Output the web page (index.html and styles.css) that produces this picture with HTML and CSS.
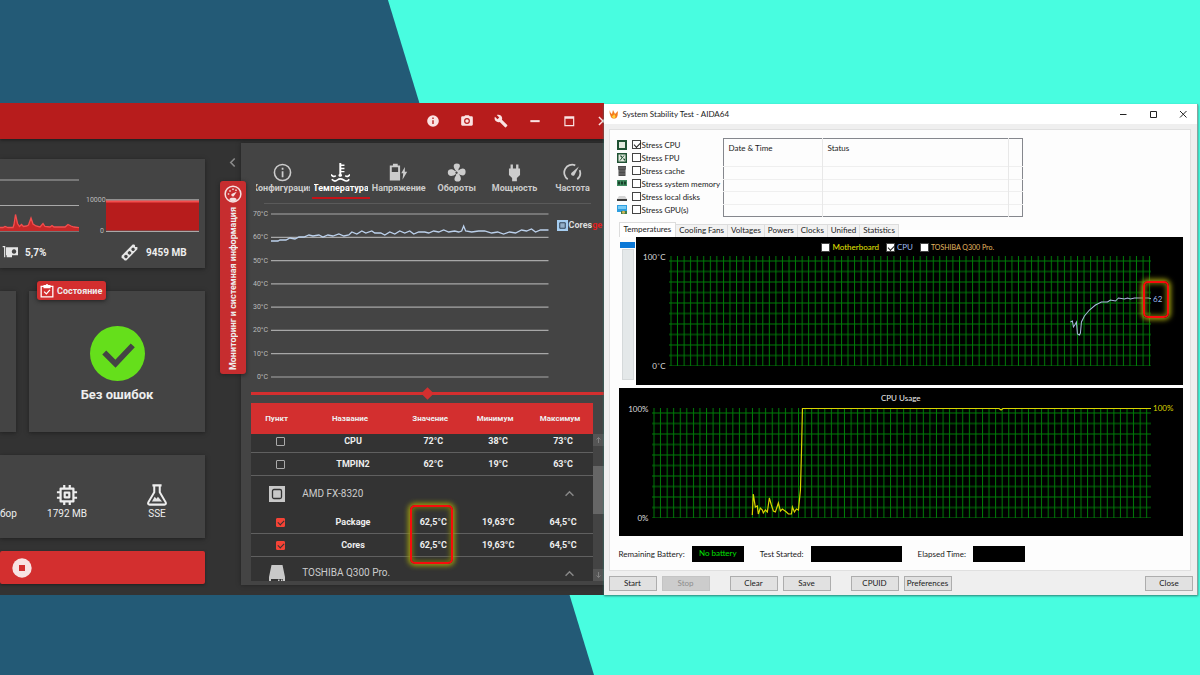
FILE: index.html
```html
<!DOCTYPE html>
<html lang="ru">
<head>
<meta charset="utf-8">
<title>Мониторинг температуры</title>
<link rel="stylesheet" href="styles.css">
</head>
<body>
<main class="desktop">

<section class="occt">
  <header class="occt-bar">
    <button class="bar-btn" aria-label="Информация"><svg viewBox="0 0 24 24"><path fill-rule="evenodd" d="M12 2a10 10 0 1 0 0 20 10 10 0 0 0 0-20zm1.200 15h-2.400v-6.500h2.400zm0-8.500h-2.400V6.200h2.400z"/></svg></button>
    <button class="bar-btn" aria-label="Снимок"><svg viewBox="0 0 24 24"><path fill-rule="evenodd" d="M9 2 7.200 4H4a2 2 0 0 0-2 2v12a2 2 0 0 0 2 2h16a2 2 0 0 0 2-2V6a2 2 0 0 0-2-2h-3.200L15 2zm3 5a5 5 0 1 1 0 10 5 5 0 0 1 0-10z"/><circle cx="12" cy="12" r="3"/></svg></button>
    <button class="bar-btn" aria-label="Настройки"><svg viewBox="0 0 24 24"><path d="m22.700 19-9.100-9.100c.9-2.300.4-5-1.500-6.900-2-2-5-2.400-7.400-1.300L9 6 6 9 1.600 4.700C.4 7.100.9 10.100 2.900 12.100c1.900 1.900 4.600 2.400 6.900 1.500l9.100 9.100c.4.4 1 .4 1.400 0l2.300-2.300c.5-.4.5-1.100.1-1.400z"/></svg></button>
    <button class="bar-btn" aria-label="Свернуть"><svg viewBox="0 0 24 24"><path d="M4 10.500h16v3.500H4z"/></svg></button>
    <button class="bar-btn" aria-label="Развернуть"><svg viewBox="0 0 24 24"><path fill-rule="evenodd" d="M4 4h17v17H4zm2 4v11h13V8z"/></svg></button>
    <button class="bar-btn" aria-label="Закрыть"><svg viewBox="0 0 24 24"><path d="M5 5 19 19M19 5 5 19" stroke="#fbe3e3" stroke-width="2.500"/></svg></button>
  </header>

  <div class="occt-body">
    <div class="side">
      <div class="card load-card">
        <div class="load">
          <svg class="load-chart" viewBox="0 0 79 53" preserveAspectRatio="none">
            <path d="M0 1h79M0 26.500h79M0 52h79" stroke="#a9a9a9" stroke-width="1.200"/>
            <path d="M0 48.500h3l2-1 3 1h5l1-3 1.500-10 2 9 2 3 2-2 2 2 3-.5 2-1 2.500-7 2 6 3 2 4 1 3-3.500 2 3 5 .5 2-1.500 2 1.500h11l3-2.500 3 1.500 3 1 8 1V52H0z" fill="#c62828"/>
            <path d="M0 48.500h3l2-1 3 1h5l1-3 1.500-10 2 9 2 3 2-2 2 2 3-.5 2-1 2.500-7 2 6 3 2 4 1 3-3.500 2 3 5 .5 2-1.500 2 1.500h11l3-2.500 3 1.500 3 1 8 1" fill="none" stroke="#f44d4d" stroke-width="1.300"/>
          </svg>
          <div class="load-value gpu-value"><svg class="ico16" viewBox="0 0 24 24"><path d="M1 4h3v16" fill="none" stroke="#e6e6e6" stroke-width="1.800"/><path fill-rule="evenodd" d="M6 5h18v12h-9v3H7v-3H6zm12 3a3.300 3.300 0 1 0 .1 0z"/></svg>5,7%</div>
        </div>
        <div class="load">
          <div class="ram-chart">
            <div class="ram-scale"><span>10000</span><span>0</span></div>
            <svg class="ram-plot" viewBox="0 0 93 33" preserveAspectRatio="none">
              <path d="M0 1h93M0 32.500h93" stroke="#a9a9a9" stroke-width="1.300"/>
              <path d="M0 2.500h93V31.500H0z" fill="#b71c1c"/>
              <path d="M0 2.500h93" stroke="#f44d4d" stroke-width="1.800"/>
            </svg>
          </div>
          <div class="load-value ram-value"><svg class="ico19" viewBox="0 0 24 24"><path fill-rule="evenodd" d="M2 16 16 2l2 0 1 1 0 2 3 0 0 3-14 14-2 0-1-1-1-1-2-1zM6 15.500a2 2 0 1 0 3 3 2 2 0 0 0-3-3zM10.500 11a2 2 0 1 0 3 3 2 2 0 0 0-3-3zM15 6.500a2 2 0 1 0 3 3 2 2 0 0 0-3-3z"/></svg>9459 MB</div>
        </div>
      </div>

      <div class="status-row">
        <div class="card"></div>
        <div class="card status-card">
          <div class="badge"><svg class="ico14" viewBox="0 0 24 24"><path d="M2 4h20v18H2zM7 6V3h3l2-2 2 2h3v3zM7 13l4 4 6-7" fill="none" stroke="#fff" stroke-width="2.200"/></svg>Состояние</div>
          <svg class="check" viewBox="0 0 54 54"><circle cx="27" cy="27" r="27" fill="#65df1b"/><path d="m14 26 11 11 17-18" fill="none" stroke="#444" stroke-width="5.500"/></svg>
          <p class="verdict">Без ошибок</p>
        </div>
      </div>

      <div class="card options">
        <div class="option cut">бор</div>
        <div class="option"><svg class="ico22" viewBox="0 0 24 24"><path d="M5 5h14v14H5zM9.500 9.500h5v5h-5zM9 1v4M15 1v4M9 19v4M15 19v4M1 9h4M1 15h4M19 9h4M19 15h4" fill="none" stroke="#eee" stroke-width="2.400" stroke-linejoin="round"/></svg>1792 MB</div>
        <div class="option"><svg class="ico22" viewBox="0 0 24 24"><path d="M7 1.500h10M9 2v7L2.500 20c-.6 1.500 0 2.500 1.500 2.500h16c1.500 0 2.100-1 1.500-2.500L15 9V2" fill="none" stroke="#eee" stroke-width="2.200"/><path d="m6.500 19 3-5 2 2 1.500-2 4.500 5z"/></svg>SSE</div>
      </div>

      <button class="stop-test" aria-label="Остановить тест"><svg class="ico20" viewBox="0 0 20 20"><circle cx="10" cy="10" r="9.700" fill="#f7e3e3"/><path d="M7 7h6v6H7z" fill="#d32f2f"/></svg></button>
    </div>

    <div class="gutter">
      <button class="collapse" aria-label="Свернуть панель"><svg viewBox="0 0 8 12"><path d="M6.500 1.500 2 6l4.500 4.500" fill="none" stroke="#8c8c8c" stroke-width="1.800"/></svg></button>
      <div class="vtab">
        <svg class="ico18" viewBox="0 0 24 24"><circle cx="12" cy="12" r="10.500" fill="none" stroke="#f5e0e0" stroke-width="2"/><path d="M7 19c2-2.500 8-2.500 10 0l-2 2.500H9zM10 12l7-3-4 6c-2 1-4-1-3-3zM5 11h2v2H5zM7 7h2v2H7zM11 4.500h2v2h-2zM15 6h2v2h-2z" fill="#f5e0e0"/></svg>
        <span>Мониторинг и системная информация</span>
      </div>
    </div>

    <div class="panel">
      <nav class="tabs">
        <button class="tab"><svg viewBox="0 0 24 24"><circle cx="12" cy="12" r="10.200" fill="none" stroke="#ccc" stroke-width="2"/><path d="M11 10.500h2.200V18H11zM11 6h2.200v2.400H11z"/></svg><span>Конфигурация</span></button>
        <button class="tab active"><svg viewBox="0 0 24 24"><path d="M10.500 0h2.500v2h4v1.800h-4V6h4v1.800h-4V10h4v1.800h-4V14c1.500.6 1.500 3.500-1.300 3.500S9 14.600 10.500 14z"/><path d="M0 14.500q3 4 6 1.500M18 16q3 2.500 6-1.500M1 20.500q3.500 4 7 1t8 0 7-1" fill="none" stroke="#fff" stroke-width="2"/></svg><span>Температура</span></button>
        <button class="tab"><svg viewBox="0 0 24 24"><path fill-rule="evenodd" d="M5 1h6v2h3v19H1V3h4zM3.500 5.500v6h8v-6z"/><path d="m20 5-4.500 8H18l-1 8 6-10h-3z"/></svg><span>Напряжение</span></button>
        <button class="tab"><svg viewBox="0 0 24 24"><path fill-rule="evenodd" d="M12 10.500c-4-4-5.500-10 .5-10 5 0 4.500 4 2 7l0 2c4-4 9-3.500 9 1.500 0 6-5 5.500-9 2.500 4 4 4.500 10-1 10-5 0-5-4-2-8l0-2c-4 4-10.500 4-10.500-1.500 0-5 6-5 9-2zM12 10.800a1.500 1.500 0 1 0 .1 0z"/></svg><span>Обороты</span></button>
        <button class="tab"><svg viewBox="0 0 24 24"><path d="M7 2h3v5h4V2h3v5h2v8l-4 4v4H9v-4l-4-4V7h2z"/></svg><span>Мощность</span></button>
        <button class="tab"><svg viewBox="0 0 24 24"><path d="M6 20.500A10 10 0 0 1 15.500 3M21 9a10 10 0 0 1-3 11.500" fill="none" stroke="#ccc" stroke-width="2.200"/><path d="M20 4.500 14.500 15c-1.500 2.500-5.500 0-4-2.500z"/></svg><span>Частота</span></button>
      </nav>
      <hr class="rule">

      <div class="temp-chart">
        <div class="scale"><span>70°C</span><span>60°C</span><span>50°C</span><span>40°C</span><span>30°C</span><span>20°C</span><span>10°C</span><span>0°C</span></div>
        <svg class="temp-plot" viewBox="0 0 278 165" preserveAspectRatio="none">
          <path d="M0 1h278M0 24.300h278M0 47.600h278M0 70.900h278M0 94.100h278M0 117.400h278M0 140.700h278M0 164h278" stroke="#a7a7a7" stroke-width="1.200"/>
          <path d="M0 28 7 28 9 27 15 27 19 25 24 26 28 24 33 24 38 22 42 23 48 22 52 24 57 22 62 23 68 21 73 23 78 22 81 19 86 21 91 18 95 20 101 18 104 20 110 20 114 22 119 19 124 21 129 18 134 20 139 18 143 21 148 19 154 19 158 20 163 18 168 19 173 17 178 19 184 18 188 19 191 18 193 13 195 18 201 19 208 18 214 18 221 20 227 19 233 21 239 19 245 20 251 17 256 18 261 16 265 19 270 17 278 17" fill="none" stroke="#bcd1ec" stroke-width="1.300"/>
        </svg>
        <div class="legend"><svg class="ico11" viewBox="0 0 12 12"><path d="M0 0h12v12H0z" fill="#a5cdf0"/><path d="M3 3h6v6H3z" fill="#93afc8" stroke="#26384a"/></svg><b>Cores<span class="pkg">ge</span></b></div>
      </div>

      <div class="splitter"><i></i></div>

      <div class="sensors">
        <table>
          <colgroup><col class="c1"><col class="c2"><col class="c3"><col class="c4"><col class="c5"></colgroup>
          <thead><tr><th>Пункт</th><th>Название</th><th>Значение</th><th>Минимум</th><th>Максимум</th></tr></thead>
          <tbody>
            <tr class="first"><td><input type="checkbox" aria-label="CPU"></td><td>CPU</td><td>72°C</td><td>38°C</td><td>73°C</td></tr>
            <tr><td><input type="checkbox" aria-label="TMPIN2"></td><td>TMPIN2</td><td>62°C</td><td>19°C</td><td>63°C</td></tr>
            <tr class="group"><td><svg class="ico16" viewBox="0 0 16 16"><path d="M0 0h16v16H0z" fill="#c8c8c8"/><rect x="3.500" y="3.500" width="9" height="9" rx="1.500" fill="#c8c8c8" stroke="#333" stroke-width="1.300"/></svg></td><td colspan="3">AMD FX-8320</td><td><svg class="up" viewBox="0 0 8 6"><path d="m.5 5 3.500-3.500L7.500 5" fill="none" stroke="#888" stroke-width="1.300"/></svg></td></tr>
            <tr><td><input type="checkbox" checked aria-label="Package"></td><td>Package</td><td>62,5°C</td><td>19,63°C</td><td>64,5°C</td></tr>
            <tr><td><input type="checkbox" checked aria-label="Cores"></td><td>Cores</td><td>62,5°C</td><td>19,63°C</td><td>64,5°C</td></tr>
            <tr class="group last"><td><svg class="ico16" viewBox="0 0 16 16"><path d="M2.500 0h11L16 12v4h-2v-2H2v2H0v-4z" fill="#c8c8c8"/><path d="M9 14.500h1.500V16H9zM12 14.500h1.500V16H12z" fill="#c8c8c8"/></svg></td><td colspan="3">TOSHIBA Q300 Pro.</td><td><svg class="up" viewBox="0 0 8 6"><path d="m.5 5 3.500-3.500L7.500 5" fill="none" stroke="#888" stroke-width="1.300"/></svg></td></tr>
          </tbody>
        </table>
        <div class="scroll"><svg viewBox="0 0 11 12"><path d="M5.500 9V3.500M3.500 5.500l2-2 2 2" fill="none" stroke="#808080"/></svg><i></i><svg viewBox="0 0 11 12"><path d="M5.500 3v5.500M3.500 6.500l2 2 2-2" fill="none" stroke="#808080"/></svg></div>
        <div class="mark mark-sensors"></div>
      </div>
    </div>
  </div>
</section>

<section class="aida" lang="en">
  <header class="aida-bar">
    <svg class="ico10" viewBox="0 0 10 10"><path d="M1 1c0 3 1 3 2 4l1-4 2 4 3-3c-.5 3 0 4-1 6-1 2-5 2-6 0C1 6 0 3 1 1z" fill="#f47b1c"/><path d="M3 8c0-2 2-1 2-3 2 2 2 4 0 4.500z" fill="#ffd23c"/></svg>
    <h1>System Stability Test - AIDA64</h1>
    <div class="win-btns">
      <button aria-label="Minimize"><svg viewBox="0 0 10 10"><path d="M2 5.500h6.500" stroke="#222"/></svg></button>
      <button aria-label="Maximize"><svg viewBox="0 0 10 10"><path d="M2.500 2.500h6v6h-6z" fill="none" stroke="#222"/></svg></button>
      <button aria-label="Close window"><svg viewBox="0 0 10 10"><path d="m2 2 6.500 6.500M8.500 2 2 8.500" stroke="#222"/></svg></button>
    </div>
  </header>

  <div class="sheet">
    <div class="top">
      <div class="stress">
        <label><svg class="ico10" viewBox="0 0 10 10"><path d="M0 0h10v10H0z" fill="#1f5233"/><path d="M2 2h6v6H2z" fill="#e3eadf"/></svg><input type="checkbox" checked>Stress CPU</label>
        <label><svg class="ico10" viewBox="0 0 10 10"><path d="M0 0h10v10H0z" fill="#1f5233"/><path d="M1.500 1.500h7v7h-7z" fill="#e3eadf"/><path d="m3 7.500 4-5M3 3h1.500v1.500M6 6h1.500v1.500" stroke="#1f5233" fill="none"/></svg><input type="checkbox">Stress FPU</label>
        <label><svg class="ico10" viewBox="0 0 10 10"><path d="M1 0h8v3L8.500 4v6h-7V4L1 3z" fill="#4d4d4d"/><path d="M1 2h8M2 5h6M2 8h6" stroke="#8a8a8a" stroke-width=".6"/></svg><input type="checkbox">Stress cache</label>
        <label><svg class="ico10" viewBox="0 0 10 10"><path d="M0 1h10v6H0z" fill="#3f8a5f"/><path d="M1 2.500h2v3H1zM4 2.500h2v3H4zM7 2.500h2v3H7z" fill="#174029"/></svg><input type="checkbox">Stress system memory</label>
        <label><svg class="ico10" viewBox="0 0 10 10"><path d="m2 4 6 0 2 3H0z" fill="#d4d4d4"/><path d="M0 7h10v2H0z" fill="#3c3c3c"/></svg><input type="checkbox">Stress local disks</label>
        <label><svg class="ico10" viewBox="0 0 10 10"><path d="M0 0h10v7H0z" fill="#2f9fe0"/><path d="M1 1h8v3H1z" fill="#7accf5"/><path d="M4 6h6v3H4z" fill="#3f7d4a"/><circle cx="6.500" cy="7.300" r="1.500" fill="#d5b85a"/></svg><input type="checkbox">Stress GPU(s)</label>
      </div>
      <table class="log">
        <colgroup><col class="l1"><col class="l2"><col class="l3"></colgroup>
        <thead><tr><th>Date &amp; Time</th><th>Status</th><th></th></tr></thead>
        <tbody><tr><td></td><td></td><td></td></tr><tr><td></td><td></td><td></td></tr><tr><td></td><td></td><td></td></tr><tr><td></td><td></td><td></td></tr></tbody>
      </table>
    </div>

    <nav class="pages">
      <button class="on">Temperatures</button><button>Cooling Fans</button><button>Voltages</button><button>Powers</button><button>Clocks</button><button>Unified</button><button>Statistics</button>
    </nav>

    <div class="temp-row">
      <div class="strip"><i></i><b></b></div>
      <div class="graph">
        <div class="g-head">
          <label class="yel"><input type="checkbox">Motherboard</label>
          <label class="blu"><input type="checkbox" checked>CPU</label>
          <label class="org"><input type="checkbox">TOSHIBA Q300 Pro.</label>
        </div>
        <div class="g-body">
          <div class="g-scale gs-temp"><span>100˚C</span><span>0˚C</span></div>
          <svg viewBox="0 0 482 110" preserveAspectRatio="none">
            <defs><pattern id="grid" width="13.100" height="21" patternUnits="userSpaceOnUse" x="1.500" y="4.500"><path d="M.5 0v21M7 0v21M0 .5h13.100M0 11h13.100" stroke="#007c08" stroke-width="1"/></pattern></defs>
            <path d="M0 0h482v110H0z" fill="url(#grid)"/>
            <path d="M401 66 403 65 404 71 406 68 407 66 408 78 410 79 411 77 412 66 415 60 420 54 426 49 432 46 438 46 441 44 446 45 449 42 455 43 458 42 461 43 465 42 470 42 479 42 482 43" fill="none" stroke="#a9bde0"/>
          </svg>
          <span class="g-end c62">62</span>
        </div>
        <div class="mark mark-62"></div>
      </div>
    </div>

    <div class="graph usage">
      <div class="g-title">CPU Usage</div>
      <div class="g-body">
        <div class="g-scale gs-cpu"><span>100%</span><span>0%</span></div>
        <svg viewBox="0 0 498 110" preserveAspectRatio="none">
          <path d="M0 0h498v110H0z" fill="url(#grid)"/>
          <path d="M100 107 101 86 103 99 105 98 106 106 108 100 110 102 111 105 113 102 115 104 117 90 119 97 121 103 123 104 126 95 128 103 130 101 134 104 136 106 139 106 140 99 142 104 144 101 146 102 147 92 148 82 149 45 150 .5 346 .5 348 2 350 .5 498 .5" fill="none" stroke="#d9d400" stroke-width="1.200"/>
        </svg>
        <span class="g-end c100">100%</span>
      </div>
    </div>

    <div class="info">
      <span>Remaining Battery:</span><output class="o1">No battery</output>
      <span>Test Started:</span><output class="o2"></output>
      <span>Elapsed Time:</span><output class="o1"></output>
    </div>
  </div>

  <footer class="cmds">
    <button>Start</button><button disabled>Stop</button>
    <button class="sp">Clear</button><button>Save</button>
    <button class="sp">CPUID</button><button>Preferences</button>
    <button class="end">Close</button>
  </footer>
</section>

</main>
</body>
</html>
```
FILE: styles.css
```css
* { box-sizing: border-box; }
body { margin: 0; font-family: Roboto, "Noto Sans", sans-serif; color: #eee; }
button { margin: 0; padding: 0; border: 0; background: none; font: inherit; color: inherit; }
p, h1 { margin: 0; }
svg { display: block; fill: #e6e6e6; flex: none; }

.desktop {
  min-height: 100vh;
  display: flex;
  align-items: flex-start;
  padding: 103px 2px 80px 0;
  position: relative;
  background: #48fde0;
  overflow: hidden;
}
.desktop::before {
  content: "";
  position: absolute;
  inset: 0;
  background: #235a76;
  clip-path: polygon(0 0, 32.330% 0, 49.500% 100%, 0 100%);
}

.ico10 { width: 10px; height: 10px; }
.ico11 { width: 11px; height: 11px; }
.ico14 { width: 14px; height: 14px; }
.ico16 { width: 16px; height: 16px; }
.ico18 { width: 18px; height: 18px; }
.ico19 { width: 19px; height: 19px; }
.ico20 { width: 20px; height: 20px; }
.ico22 { width: 22px; height: 22px; }

/* OCCT window */
.occt { flex: 604 1 0; min-width: 0; position: relative; overflow: hidden; background: #333; }
.occt-bar {
  height: 36px;
  display: flex;
  justify-content: flex-end;
  align-items: center;
  gap: 20px;
  margin-right: -6px;
  background: #b71c1c;
  box-shadow: 0 1px 3px #1c1c1c;
}
.bar-btn svg { width: 14px; height: 14px; fill: #fbe3e3; }
.occt-body { display: grid; grid-template-columns: 205px 36px 1fr; padding-bottom: 10px; }
.side { padding-top: 20px; }
.card { background: #444; box-shadow: 0 1px 4px #202020; }

.load-card { height: 109px; display: grid; grid-template-columns: 79px 1fr; column-gap: 7px; padding: 20px 6px 0 0; }
.load { display: flex; flex-direction: column; }
.load-chart { width: 100%; height: 53px; }
.load-value { display: flex; align-items: center; gap: 7px; height: 22px; margin-top: auto; margin-bottom: 5px; font-size: 10px; font-weight: 700; }
.gpu-value { padding-left: 2px; }
.ram-value { padding-left: 34px; }
.ram-chart { display: flex; gap: 2px; padding-top: 20px; }
.ram-scale { width: 18px; display: flex; flex-direction: column; justify-content: space-between; text-align: right; font-size: 7px; line-height: 8px; color: #bbb; margin: -3px 0; }
.ram-plot { flex: 1; height: 33px; min-width: 0; }

.status-row { display: grid; grid-template-columns: 16px 1fr; gap: 13px; margin-top: 23px; }
.status-card { height: 141px; position: relative; display: flex; flex-direction: column; align-items: center; padding-top: 35px; }
.badge {
  position: absolute; left: 8px; top: -10px; height: 19px;
  display: flex; align-items: center; gap: 3px; padding: 0 4px 0 3px;
  background: #d32f2f; border-radius: 3px; font-size: 9px; font-weight: 700; box-shadow: 0 1px 4px #202020;
}
.check { width: 55px; height: 55px; }
.verdict { margin-top: 5px; font-size: 13px; line-height: 18px; font-weight: 700; }

.options { height: 83px; margin-top: 23px; display: grid; grid-template-columns: 22px 90px 90px; padding-top: 29px; font-size: 10px; line-height: 12px; }
.option { display: flex; flex-direction: column; align-items: center; gap: 2px; }
.option.cut { align-items: flex-start; justify-content: flex-end; padding-bottom: 18px; }
.stop-test { display: flex; align-items: center; width: 100%; height: 33px; margin-top: 13px; padding-left: 12px; background: #d32f2f; border-radius: 2px; box-shadow: 0 1px 3px #202020; }

.gutter { position: relative; z-index: 1; }
.collapse { display: block; margin: 18px 0 0 24px; }
.collapse svg { width: 7px; height: 11px; }
.vtab {
  position: absolute; left: 15px; top: 42px; width: 26px; height: 193px;
  display: flex; flex-direction: column; align-items: center; justify-content: space-between; padding: 4px 0;
  background: #c62d2f; border-radius: 3px; box-shadow: 0 1px 4px #222;
  font-size: 9px; line-height: 12px; font-weight: 700;
}
.vtab span { writing-mode: vertical-rl; transform: rotate(180deg); white-space: nowrap; }

.panel { min-width: 0; margin-top: 4px; background: #444; box-shadow: 0 0 4px #222; padding-bottom: 4px; }
.tabs { display: grid; grid-template-columns: repeat(6, 1fr); padding: 0 2px 0 13px; height: 60px; }
.tab { display: flex; flex-direction: column; align-items: center; justify-content: flex-start; padding-top: 20px; height: 56px; min-width: 0; color: #ccc; }
.tab svg { width: 19px; height: 19px; fill: #ccc; }
.tab span { display: flex; justify-content: center; width: 54px; overflow: hidden; white-space: nowrap; font-size: 9px; line-height: 12px; font-weight: 700; }
.tab.active { color: #fff; border-bottom: 2px solid #c51218; }
.tab.active svg { fill: #fff; }
.rule { height: 1px; margin: 0 13px 0 23px; border: 0; background: #5a5a5a; }

.temp-chart { display: flex; gap: 3px; margin-left: 11px; padding-top: 9px; height: 183px; }
.scale { width: 16px; height: 171px; margin-top: -3px; display: flex; flex-direction: column; justify-content: space-between; text-align: right; font-size: 7px; line-height: 8px; color: #bbb; }
.temp-plot { flex: 1; min-width: 0; height: 165px; }
.legend { display: flex; align-items: center; align-self: flex-start; gap: 1px; width: 47px; margin: 6px 0 0 5px; font-size: 9px; line-height: 12px; color: #ddd; }
.legend .pkg { color: #e02020; }

.splitter { height: 3px; margin: 5px 0 8px 10px; background: #d32f2f; display: flex; justify-content: center; align-items: center; }
.splitter i { width: 9px; height: 9px; background: #d32f2f; transform: rotate(45deg); }

.sensors { position: relative; display: flex; margin-left: 10px; background: #333; }
.sensors table { flex: 1; min-width: 0; table-layout: fixed; border-collapse: separate; border-spacing: 0; font-size: 9px; line-height: 12px; font-weight: 700; text-align: center; }
.sensors .c1 { width: 15%; }
.sensors .c2 { width: 28%; }
.sensors .c3 { width: 19%; }
.sensors .c4 { width: 19%; }
.sensors .c5 { width: 19%; }
.sensors th { height: 31px; padding: 0; background: #d32f2f; font-size: 8px; }
.sensors td { height: 23px; padding: 0 0 0 6px; border-bottom: 1px solid #606060; }
.sensors td:first-child { padding-left: 8px; }
.sensors .first td { height: 19px; padding-bottom: 4px; }
.sensors .group td { height: 35px; border: 0; font-size: 10px; font-weight: 400; color: #ccc; }
.sensors .group td:nth-child(2) { text-align: left; padding-left: 0; }
.sensors .group td:first-child { padding-left: 0; }
.sensors .group svg { margin: 0 auto; }
.sensors .group.last td { height: 24px; padding-top: 8px; }
.sensors .group svg.up { width: 9px; height: 7px; margin-left: 31px; }
.sensors input { appearance: none; display: block; width: 9px; height: 9px; margin: 0 auto; border: 1px solid #aaa; border-radius: 1px; }
.sensors input:checked { background: #f44336; border-color: #f44336; }
.sensors input:checked::after { content: ""; display: block; width: 5px; height: 3px; margin: 1px; border: solid #333; border-width: 0 0 1px 1px; transform: rotate(-45deg); }
.scroll { width: 11px; padding-top: 31px; display: flex; flex-direction: column; background: #444; }
.scroll svg { width: 11px; height: 12px; background: #555; }
.scroll i { height: 48px; margin: 20px 0 auto; background: #666; }

.mark { position: absolute; border: 2px solid #f80c0c; border-radius: 5px; box-shadow: 0 0 5px 2px #9a9a10, inset 0 0 5px 1px #77770c; }
.mark-sensors { left: 159px; top: 102px; width: 43px; height: 59px; }

/* AIDA64 window */
.aida {
  flex: 594 1 0; min-width: 0; position: relative; margin-top: 1px;
  background: #efefef; color: #1a1a1a; border-right: 1px solid #8aa39f;
  box-shadow: 0 1px 2px #2a7f73; font-family: Lato, "Noto Sans", sans-serif; font-size: 8px; line-height: 12px;
}
.aida-bar { height: 20px; display: flex; align-items: center; gap: 4px; padding: 0 9px 0 5px; background: #fff; }
.aida h1 { font-size: 8px; font-weight: 400; }
.win-btns { margin-left: auto; display: flex; gap: 20px; }
.win-btns svg { width: 10px; height: 10px; }
.sheet { margin: 5px 6px 0 5px; padding: 8px 7px 8px; background: #fdfdfd; border: 1px solid #e0e0e0; }
.top { display: flex; height: 84px; }
.stress { width: 106px; }
.stress label { display: flex; align-items: center; height: 13px; }
.aida input { appearance: none; flex: none; width: 9px; height: 9px; margin: 0 2px 0 5px; border: 1px solid #444; background: #fff; }
.aida input:checked::after { content: ""; display: block; width: 6px; height: 3px; margin: 1px 0 0 1px; border: solid #222; border-width: 0 0 1px 1px; transform: rotate(-45deg); }
.stress input { margin-right: 1px; }
.log { width: 300px; height: 79px; table-layout: fixed; border-collapse: collapse; border: 1px solid #85878d; }
.log .l1 { width: 99px; }
.log .l3 { width: 14px; }
.log th { height: 28px; padding: 3px 5px; text-align: left; vertical-align: top; font-weight: 400; }
.log td { padding: 0; border-top: 1px solid #efefef; }
.log th + th, .log td + td { border-left: 1px solid #e8e8e8; }

.pages { display: flex; align-items: flex-end; height: 15px; padding-left: 2px; }
.pages button { height: 13px; padding: 0 3px 2px; background: #f2f2f2; border: 1px solid #ddd; border-width: 1px 1px 0 0; white-space: nowrap; line-height: 10px; }
.pages .on { height: 15px; padding: 0 4px 2px; background: #fff; border-left-width: 1px; }

.temp-row { display: flex; }
.strip { width: 19px; padding: 5px 1px 0 3px; }
.strip i { display: block; height: 6px; background: #0a78d7; }
.strip b { display: block; height: 131px; margin: 1px 1px 0 2px; background: #e4e8e9; border: 1px solid #d5d9da; }
.graph { flex: 1; min-width: 0; position: relative; height: 148px; background: #000; color: #ddd; }
.g-head { height: 19px; display: flex; justify-content: center; align-items: center; gap: 2px; padding: 1px 8px 0 0; }
.g-head label { display: flex; align-items: center; font-size: 8px; }
.g-head .yel { color: #e6e600; }
.g-head .blu { color: #9db9ee; }
.g-head .org { color: #e6b860; font-size: 7px; }
.g-body { display: flex; }
.g-body svg { flex: 1; min-width: 0; height: 110px; }
.g-scale { display: flex; flex-direction: column; justify-content: space-between; height: 121px; margin-top: -5px; text-align: right; }
.gs-temp { width: 30px; margin-right: 3px; }
.gs-cpu { width: 30px; margin-right: 3px; }
.g-end { width: 32px; padding-left: 2px; }
.c62 { margin-top: 37px; color: #9db9ee; }
.c100 { margin-top: -6px; color: #d9d400; }
.mark-62 { right: 14px; top: 44px; width: 26px; height: 37px; }
.usage { margin: 3px 0 0 2px; }
.g-title { height: 20px; padding-top: 4px; text-align: center; color: #eee; }

.info { display: flex; align-items: center; margin: 10px 0 0 2px; }
.info span { white-space: nowrap; }
.info output { height: 16px; margin: 0 16px 0 7px; background: #000; color: #00e000; text-align: center; line-height: 15px; }
.info .o1 { width: 52px; }
.info .o2 { width: 91px; }

.cmds { display: flex; gap: 5px; padding: 5px 4px 4px 5px; }
.cmds button { width: 48px; height: 15px; padding-bottom: 1px; background: #e1e1e1; border: 1px solid #adadad; font-size: 8px; line-height: 12px; }
.cmds button:disabled { background: #ccc; border-color: #c4c4c4; color: #8d8d8d; }
.cmds .sp { margin-left: 15px; }
.cmds .end { margin-left: auto; }
```
